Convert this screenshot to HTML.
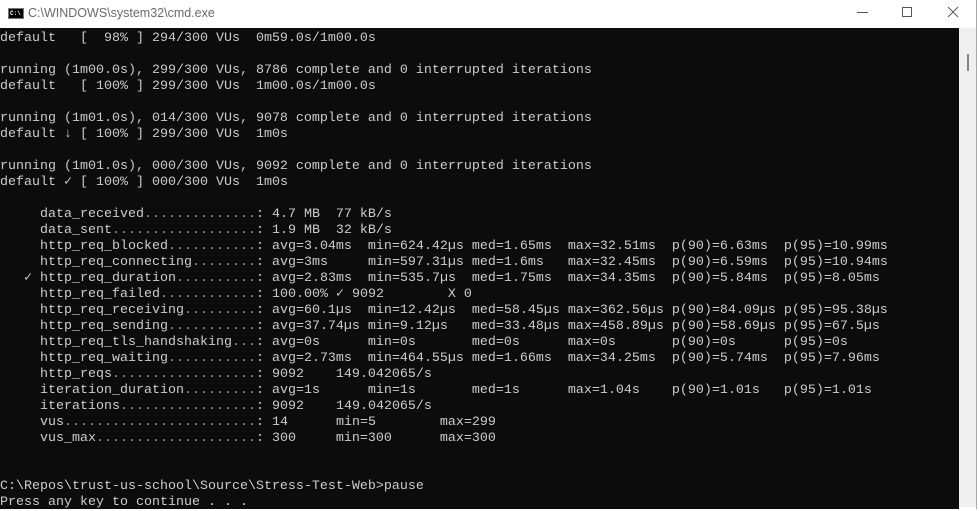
<!DOCTYPE html>
<html><head><meta charset="utf-8"><style>
html,body{margin:0;padding:0;width:979px;height:509px;overflow:hidden;background:#fff;}
#title{position:absolute;left:0;top:0;width:976px;height:28px;background:#fff;}
#title .t{position:absolute;left:28px;top:6px;font:12.5px "Liberation Sans",sans-serif;color:#6a6a6a;}
#icon{position:absolute;left:8px;top:8px;width:16px;height:11px;background:#000;border:1px solid #777;box-sizing:border-box;}
#icon span{position:absolute;left:1px;top:1px;font:bold 6px "Liberation Mono",monospace;color:#fff;line-height:7px;}
#con{position:absolute;left:0;top:28px;width:959px;height:481px;background:#0c0c0c;}
pre{margin:0;padding-top:3px;font:13.333px/16px "Liberation Mono","DejaVu Sans Mono",monospace;color:#cccccc;white-space:pre;}
.d{color:#9a9a9a;}
#sb{position:absolute;left:959px;top:28px;width:17px;height:479px;background:#f0f0f0;}
#thumb{position:absolute;left:967px;top:54px;width:2px;height:17px;background:#858585;}
#edge{position:absolute;left:976px;top:0;width:1px;height:509px;background:#aaa;}
</style></head><body>
<div id="title"><div id="icon"><span>C:\</span></div><div class="t">C:\WINDOWS\system32\cmd.exe</div>
<svg style="position:absolute;left:850px;top:4px" width="120" height="18" viewBox="0 0 120 18">
<line x1="7" y1="8.5" x2="18" y2="8.5" stroke="#555" stroke-width="1"/>
<rect x="52.5" y="3.5" width="9" height="9" fill="none" stroke="#555" stroke-width="1"/>
<line x1="98" y1="3" x2="108" y2="13" stroke="#555" stroke-width="1"/>
<line x1="108" y1="3" x2="98" y2="13" stroke="#555" stroke-width="1"/>
</svg></div>
<div id="con"><pre>default   [  98% ] 294/300 VUs  0m59.0s/1m00.0s

running (1m00.0s), 299/300 VUs, 8786 complete and 0 interrupted iterations
default   [ 100% ] 299/300 VUs  1m00.0s/1m00.0s

running (1m01.0s), 014/300 VUs, 9078 complete and 0 interrupted iterations
default ↓ [ 100% ] 299/300 VUs  1m0s

running (1m01.0s), 000/300 VUs, 9092 complete and 0 interrupted iterations
default ✓ [ 100% ] 000/300 VUs  1m0s

     data_received<span class="d">..............</span>: 4.7 MB  77 kB/s
     data_sent<span class="d">..................</span>: 1.9 MB  32 kB/s
     http_req_blocked<span class="d">...........</span>: avg=3.04ms  min=624.42µs med=1.65ms  max=32.51ms  p(90)=6.63ms  p(95)=10.99ms
     http_req_connecting<span class="d">........</span>: avg=3ms     min=597.31µs med=1.6ms   max=32.45ms  p(90)=6.59ms  p(95)=10.94ms
   ✓ http_req_duration<span class="d">..........</span>: avg=2.83ms  min=535.7µs  med=1.75ms  max=34.35ms  p(90)=5.84ms  p(95)=8.05ms
     http_req_failed<span class="d">............</span>: 100.00% ✓ 9092        X 0
     http_req_receiving<span class="d">.........</span>: avg=60.1µs  min=12.42µs  med=58.45µs max=362.56µs p(90)=84.09µs p(95)=95.38µs
     http_req_sending<span class="d">...........</span>: avg=37.74µs min=9.12µs   med=33.48µs max=458.89µs p(90)=58.69µs p(95)=67.5µs
     http_req_tls_handshaking<span class="d">...</span>: avg=0s      min=0s       med=0s      max=0s       p(90)=0s      p(95)=0s
     http_req_waiting<span class="d">...........</span>: avg=2.73ms  min=464.55µs med=1.66ms  max=34.25ms  p(90)=5.74ms  p(95)=7.96ms
     http_reqs<span class="d">..................</span>: 9092    149.042065/s
     iteration_duration<span class="d">.........</span>: avg=1s      min=1s       med=1s      max=1.04s    p(90)=1.01s   p(95)=1.01s
     iterations<span class="d">.................</span>: 9092    149.042065/s
     vus<span class="d">........................</span>: 14      min=5        max=299
     vus_max<span class="d">....................</span>: 300     min=300      max=300


C:\Repos\trust-us-school\Source\Stress-Test-Web&gt;pause
Press any key to continue . . .</pre></div>
<div id="sb"></div><div id="thumb"></div><div id="edge"></div>
</body></html>
